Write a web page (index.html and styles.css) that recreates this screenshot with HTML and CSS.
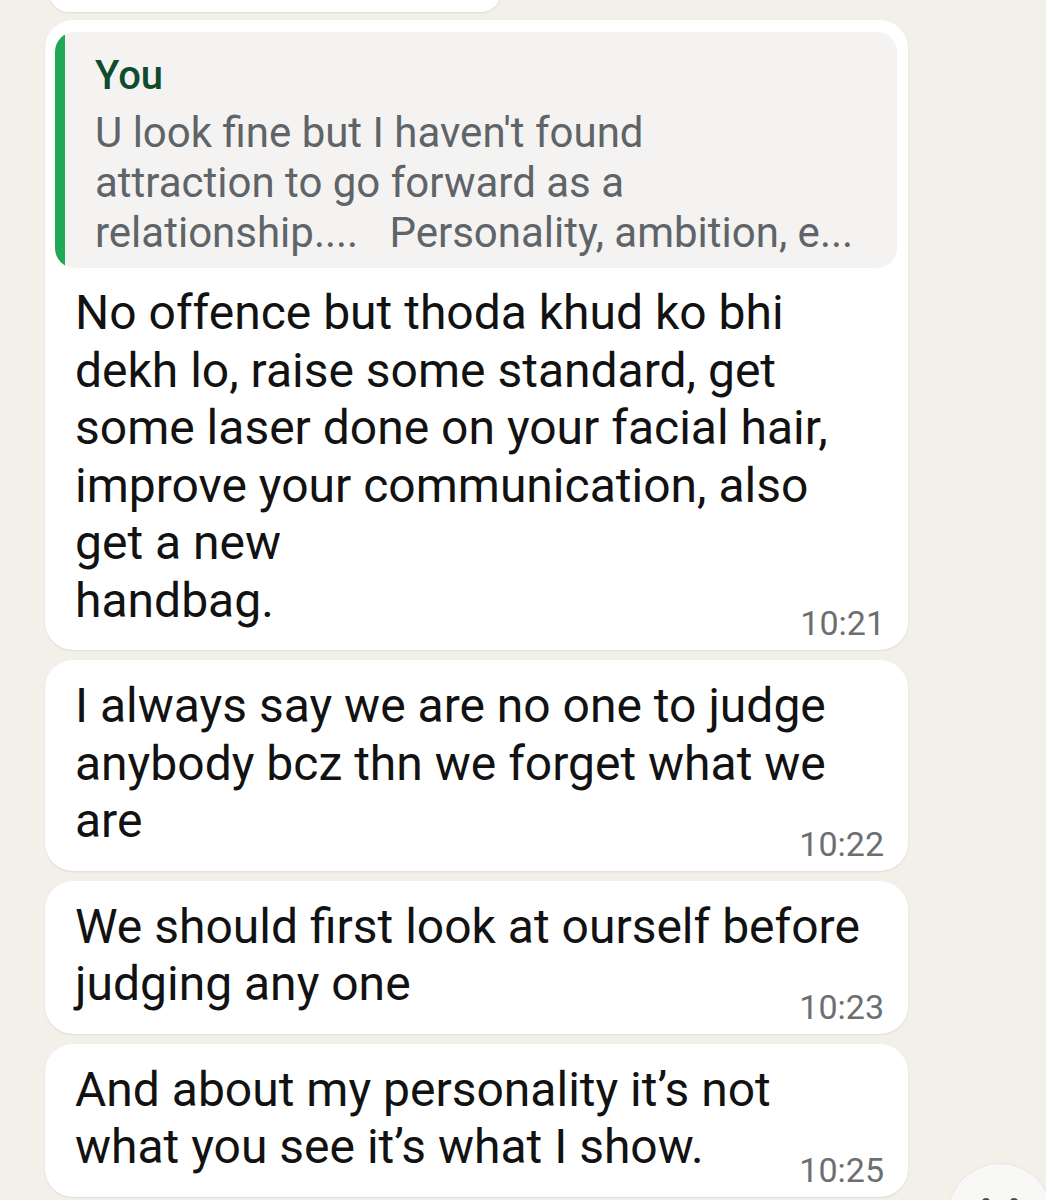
FILE: index.html
```html
<!DOCTYPE html>
<html>
<head>
<meta charset="utf-8">
<link rel="stylesheet" href="styles.css">
</head>
<body>
<div class="chat">
  <div class="bubble prev"></div>

  <div class="bubble first">
    <div class="quote">
      <div class="quote-bar"></div>
      <div class="quote-body">
        <div class="quote-name">You</div>
        <div class="quote-text">U look fine but I haven't found<br>attraction to go forward as a<br>relationship....&nbsp;&nbsp; Personality, ambition, e...</div>
      </div>
    </div>
    <div class="msg">No offence but thoda khud ko bhi<br>dekh lo, raise some standard, get<br>some laser done on your facial hair,<br>improve your communication, also<br>get a new<br>handbag.</div>
    <div class="time">10:21</div>
  </div>

  <div class="bubble">
    <div class="msg">I always say we are no one to judge<br>anybody bcz thn we forget what we<br>are</div>
    <div class="time">10:22</div>
  </div>

  <div class="bubble">
    <div class="msg">We should first look at ourself before<br>judging any one</div>
    <div class="time">10:23</div>
  </div>

  <div class="bubble">
    <div class="msg">And about my personality it’s not<br>what you see it’s what I show.</div>
    <div class="time">10:25</div>
  </div>
</div>
<div class="fab-clip"><div class="fab"><span class="dot"></span><span class="dot"></span></div></div>
</body>
</html>
```
FILE: styles.css
```css
html, body {
  margin: 0;
  padding: 0;
}
body {
  background: #f3f0ea;
  font-family: Roboto, "Noto Sans", "Liberation Sans", sans-serif;
  width: 1046px;
  height: 1200px;
  overflow: hidden;
  position: relative;
}
.chat {
  display: flex;
  flex-direction: column;
  gap: 10px;
  padding-left: 45px;
  width: 863px;
}
.bubble {
  background: #ffffff;
  border-radius: 28px;
  box-shadow: 0 1px 2px rgba(0, 0, 0, 0.09);
  padding: 17px 24px 8px 30px;
}
.bubble.prev {
  width: 452px;
  height: 40px;
  margin-top: -28px;
  margin-left: 4px;
  padding: 0;
}
.bubble.first {
  padding-top: 12px;
  padding-left: 10px;
  padding-right: 11px;
  padding-bottom: 8px;
  margin-top: -2px;
}
.quote {
  display: flex;
  background: #f4f3f1;
  border-radius: 20px;
  overflow: hidden;
  height: 236px;
}
.quote-bar {
  width: 10px;
  background: #1fa855;
  flex: none;
}
.quote-body {
  padding: 22px 0 0 30px;
}
.quote-name {
  font-size: 40px;
  line-height: 44px;
  color: #0e4c2d;
  font-weight: 500;
  margin-bottom: 10px;
}
.quote-text {
  font-size: 42px;
  line-height: 50px;
  color: #5f6469;
}
.bubble.first .msg {
  margin-top: 16px;
  padding-left: 20px;
}
.bubble.first .time {
  padding-right: 12px;
}
.msg {
  font-size: 48px;
  line-height: 57.5px;
  color: #121212;
}
.time {
  text-align: right;
  font-size: 34px;
  line-height: 38px;
  color: #6c6f72;
  margin-top: -25px;
}
.fab-clip {
  position: absolute;
  left: 946px;
  top: 1163px;
  width: 100px;
  height: 37px;
  overflow: hidden;
}
.fab {
  width: 104px;
  height: 104px;
  margin: 1px 0 0 2px;
  border-radius: 50%;
  background: #f8f8f7;
  box-shadow: 0 0 2px rgba(0, 0, 0, 0.12);
  display: flex;
  justify-content: center;
  gap: 20px;
  padding-top: 34px;
  box-sizing: border-box;
}
.dot {
  width: 8px;
  height: 8px;
  border-radius: 50%;
  background: #4a4a4a;
}
```
